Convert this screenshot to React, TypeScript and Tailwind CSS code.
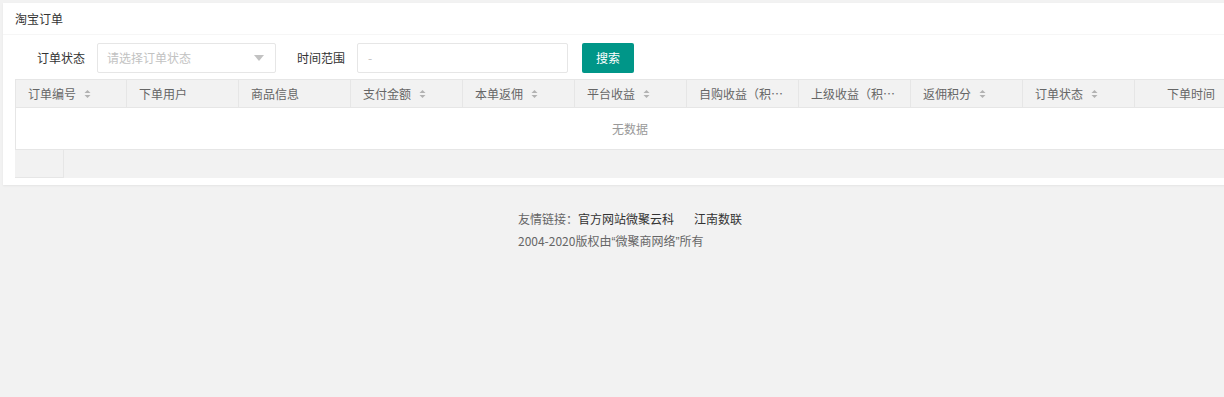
import React from 'react';

const columns = [
  { title: '订单编号', sort: true },
  { title: '下单用户', sort: false },
  { title: '商品信息', sort: false },
  { title: '支付金额', sort: true },
  { title: '本单返佣', sort: true },
  { title: '平台收益', sort: true },
  { title: '自购收益（积分）', sort: false },
  { title: '上级收益（积分）', sort: false },
  { title: '返佣积分', sort: true },
  { title: '订单状态', sort: true },
];

function SortIcon() {
  return (
    <svg width="7" height="10" viewBox="0 0 7 10" className="ml-[8px] shrink-0">
      <path d="M3.5 1 L6.5 4 L0.5 4 Z" fill="#b2b2b2" />
      <path d="M3.5 9 L6.5 6 L0.5 6 Z" fill="#b2b2b2" />
    </svg>
  );
}

export default function App() {
  return (
    <div
      className="w-[1224px] h-[397px] overflow-hidden bg-[#f2f2f2] text-[12px] text-[#333]"
      style={{ fontFamily: '"Helvetica Neue", "Noto Sans CJK SC", sans-serif' }}
    >
      <div className="w-[1260px] pt-[3px]">
        {/* Card */}
        <div className="mx-[3px] bg-white shadow-[0_1px_2px_0_rgba(0,0,0,0.06)]">
          <div className="h-[32px] flex items-center px-[12px] border-b border-[#f6f6f6] text-[#333]">淘宝订单</div>

          <div className="px-[12px] pt-[8px] pb-[7px]">
            {/* Filter row */}
            <div className="flex items-center h-[30px]">
              <label className="w-[82px] pr-[12px] text-right text-[#333]">订单状态</label>
              <div className="w-[179px] h-[30px] border border-[#e6e6e6] rounded-[2px] flex items-center justify-between pl-[9px] pr-[11px]">
                <span className="text-[#c2c2c2]">请选择订单状态</span>
                <svg width="10" height="6" viewBox="0 0 10 6">
                  <path d="M0 0 L10 0 L5 6 Z" fill="#c2c2c2" />
                </svg>
              </div>
              <label className="ml-[21px] w-[60px] pr-[12px] text-right text-[#333]">时间范围</label>
              <div className="w-[211px] h-[30px] border border-[#e6e6e6] rounded-[2px] flex items-center pl-[10px] text-[#c2c2c2]">-</div>
              <button className="ml-[14px] w-[52px] h-[30px] bg-[#009688] text-white rounded-[2px]">搜索</button>
            </div>

            {/* Table */}
            <div className="mt-[6px] w-[1230px]">
              <div className="flex h-[29px] bg-[#f2f2f2] border border-[#e6e6e6] text-[#666]">
                {columns.map((c, i) => (
                  <div
                    key={c.title}
                    className={`shrink-0 flex items-center px-[12px] ${i > 0 ? 'w-[112px] border-l border-[#e6e6e6]' : 'w-[110px]'}`}
                  >
                    <span className="truncate">{c.title}</span>
                    {c.sort && <SortIcon />}
                  </div>
                ))}
                <div className="flex-1 flex items-center justify-end pr-[29px] border-l border-[#e6e6e6]">下单时间</div>
              </div>
              <div className="h-[42px] flex items-center justify-center border-x border-b border-[#e6e6e6] text-[#999]">无数据</div>
              <div className="flex h-[28px] bg-[#f2f2f2]">
                <div className="w-[49px] border-r border-b border-[#e6e6e6]" />
                <div className="flex-1" />
              </div>
            </div>
          </div>
        </div>

        {/* Footer */}
        <div className="pt-[23px] flex justify-center text-[#666] leading-[22px]">
          <div className="text-left">
            <div>
              友情链接：<span className="text-[#333]">官方网站微聚云科</span>
              <span className="ml-[20px] text-[#333]">江南数联</span>
            </div>
            <div>
              2004-2020版权由<span style={{ fontFamily: '"Liberation Sans", sans-serif' }}>“</span>微聚商网络
              <span style={{ fontFamily: '"Liberation Sans", sans-serif' }}>”</span>所有
            </div>
          </div>
        </div>
      </div>
    </div>
  );
}
